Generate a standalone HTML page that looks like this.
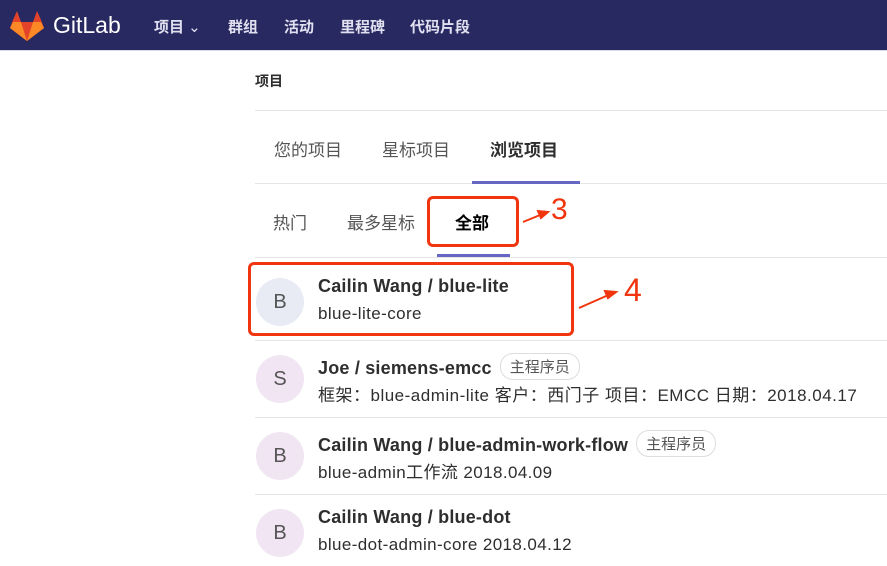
<!DOCTYPE html><html><head><meta charset="utf-8"><style>
body{margin:0;width:887px;height:566px;overflow:hidden;background:#fff;font-family:"Liberation Sans","Noto Sans CJK SC",sans-serif;position:relative;color:#2e2e2e}
.nav{position:absolute;left:0;top:0;width:887px;height:50px;background:#292961;border-bottom:1px solid #d8d8e8}
.a{position:absolute;white-space:nowrap}
.line{position:absolute;left:255px;right:0;height:1px;background:#e5e5e5}
.av{position:absolute;left:256px;width:48px;height:48px;border-radius:50%;text-align:center;line-height:48px;font-size:20px;color:#555}
.t{font-weight:bold;font-size:18px;color:#2e2e2e;letter-spacing:0.2px}
.d{font-size:17px;color:#2e2e2e;letter-spacing:0.4px}
.badge{display:inline-block;border:1px solid #ddd;border-radius:13px;font-size:15px;font-weight:normal;color:#555;padding:2px 9px;margin-left:8px;vertical-align:2px;letter-spacing:0}
.red{position:absolute;border:3px solid #f0350f;border-radius:6px}
</style></head><body>
<div class="nav">
<svg class="a" style="left:10px;top:11px" width="34" height="30" viewBox="0 0 34 30"><polygon points="17,30 0,17 3,9 7,0 11,11 23,11 27,0 31,9 34,17" fill="#e24329"/><polygon points="17,30 11,11 3,11 0,17" fill="#fc6d26"/><polygon points="17,30 23,11 31,11 34,17" fill="#fc6d26"/><polygon points="17,30 11,11 23,11" fill="#e24329"/><polygon points="0,17 3,11 11,11 17,30" fill="#fca326" opacity=".5"/><polygon points="34,17 31,11 23,11 17,30" fill="#fca326" opacity=".5"/></svg>
<div class="a" style="left:53px;top:12px;font-size:23px;color:#fff">GitLab</div>
<div class="a" style="left:154px;top:16px;font-size:15px;font-weight:bold;color:#e0e0f0">项目 <span style="font-weight:normal">&#8964;</span></div>
<div class="a" style="left:228px;top:16px;font-size:15px;font-weight:bold;color:#e0e0f0">群组</div>
<div class="a" style="left:284px;top:16px;font-size:15px;font-weight:bold;color:#e0e0f0">活动</div>
<div class="a" style="left:340px;top:16px;font-size:15px;font-weight:bold;color:#e0e0f0">里程碑</div>
<div class="a" style="left:410px;top:16px;font-size:15px;font-weight:bold;color:#e0e0f0">代码片段</div>
</div>
<div class="a" style="left:255px;top:71px;font-size:14px;font-weight:bold">项目</div>
<div class="line" style="top:110px"></div>
<div class="a" style="left:274px;top:136px;font-size:17px;color:#555">您的项目</div>
<div class="a" style="left:382px;top:136px;font-size:17px;color:#555">星标项目</div>
<div class="a" style="left:490px;top:136px;font-size:17px;font-weight:bold">浏览项目</div>
<div class="line" style="top:183px"></div>
<div class="a" style="left:472px;top:181px;width:108px;height:3px;background:#6666c4"></div>
<div class="a" style="left:273px;top:209px;font-size:17px;color:#555">热门</div>
<div class="a" style="left:347px;top:209px;font-size:17px;color:#555">最多星标</div>
<div class="a" style="left:455px;top:209px;font-size:17px;font-weight:bold;color:#000">全部</div>
<div class="line" style="top:257px"></div>
<div class="a" style="left:437px;top:254px;width:73px;height:3px;background:#6666c4"></div>

<div class="av" style="top:278px;background:#e8eaf4">B</div>
<div class="a t" style="left:318px;top:276px">Cailin Wang / blue-lite</div>
<div class="a d" style="left:318px;top:304px">blue-lite-core</div>
<div class="line" style="top:340px"></div>
<div class="av" style="top:355px;background:#f1e4f3">S</div>
<div class="a t" style="left:318px;top:353px">Joe / siemens-emcc<span class="badge">主程序员</span></div>
<div class="a d" style="left:318px;top:381px;letter-spacing:0.5px">框架：blue-admin-lite 客户：西门子 项目：EMCC 日期：2018.04.17</div>
<div class="line" style="top:417px"></div>
<div class="av" style="top:432px;background:#f1e4f3">B</div>
<div class="a t" style="left:318px;top:430px">Cailin Wang / blue-admin-work-flow<span class="badge">主程序员</span></div>
<div class="a d" style="left:318px;top:458px">blue-admin工作流 2018.04.09</div>
<div class="line" style="top:494px"></div>
<div class="av" style="top:509px;background:#f1e4f3">B</div>
<div class="a t" style="left:318px;top:507px">Cailin Wang / blue-dot</div>
<div class="a d" style="left:318px;top:535px">blue-dot-admin-core 2018.04.12</div>

<div class="red" style="left:427px;top:196px;width:86px;height:45px"></div>
<div class="red" style="left:248px;top:262px;width:320px;height:68px"></div>
<svg class="a" style="left:0;top:0" width="887" height="566"><g stroke="#f0350f" stroke-width="2" fill="#f0350f"><line x1="523" y1="222" x2="545" y2="213"/><polygon points="548,212 538,211 541,218"/><line x1="579" y1="308" x2="613" y2="293"/><polygon points="616,292 605,291 608,298"/></g></svg>
<div class="a" style="left:551px;top:193px;font-size:30px;color:#f0350f">3</div>
<div class="a" style="left:624px;top:272px;font-size:32px;color:#f0350f">4</div>
</body></html>
